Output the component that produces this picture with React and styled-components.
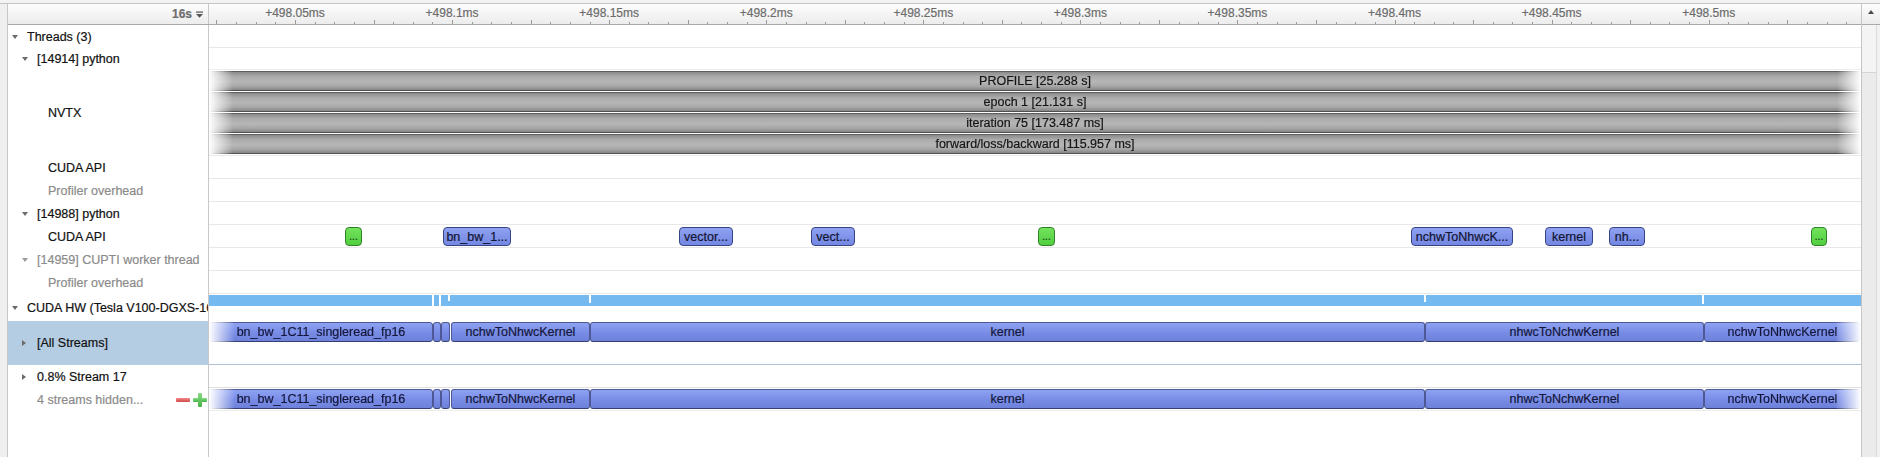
import React from "react";
import styled, { createGlobalStyle, css } from "styled-components";

// track geometry (px, measured from the left edge of the timeline)
const TRACK_W = 1652;
const TICK0 = 86; // x of "+498.05ms"
const STEP = 157.08; // 0.05 ms

const GlobalStyle = createGlobalStyle`
  * { box-sizing: border-box; }
  html, body { margin: 0; padding: 0; background: #fff; }
  body {
    font-family: "Liberation Sans", Arial, Helvetica, sans-serif;
    font-size: 12.5px;
    color: #141414;
    -webkit-text-stroke: 0.2px currentColor;
  }
`;

const Window = styled.div`
  width: 1880px;
  height: 457px;
  display: flex;
  flex-direction: column;
  overflow: hidden;
  background: #fff;
`;
const TopStrip = styled.div`
  height: 4px;
  background: #f3f3f3;
  border-bottom: 1px solid #c4c4c4;
`;
const Body = styled.div`
  flex: 1;
  display: flex;
  min-height: 0;
`;
const Gutter = styled.div`
  width: 8px;
  background: #efefef;
  border-right: 1px solid #c6c6c6;
`;
const Panel = styled.div`
  flex: 1;
  display: flex;
  flex-direction: column;
  min-width: 0;
`;

// header / ruler
const HeaderRow = styled.div`
  display: grid;
  grid-template-columns: 201px 1fr;
  height: 21px;
  background: linear-gradient(#fdfdfd, #ececec);
  border-bottom: 1px solid #a9a9a9;
`;
const ZoomCell = styled.div`
  display: flex;
  align-items: center;
  justify-content: flex-end;
  gap: 4px;
  padding-right: 5px;
  border-right: 1px solid #c8c8c8;
  color: #6e6e6e;
  font-size: 12px;
  font-weight: bold;
`;
const Ruler = styled.div`
  position: relative;
  overflow: hidden;
`;
const Tick = styled.div`
  position: absolute;
  bottom: 0;
  width: 1px;
  background: #9a9a9a;
  height: ${(p) => (p.$kind === "small" ? 2 : 4)}px;
`;
const TickLabel = styled.div`
  position: absolute;
  top: 2px;
  transform: translateX(-50%);
  color: #6c6c6c;
  font-size: 12px;
  white-space: nowrap;
`;

// tree rows
const Row = styled.div`
  display: grid;
  grid-template-columns: 201px 1fr;
  height: ${(p) => p.$h}px;
  flex: ${(p) => (p.$fill ? 1 : "none")};
`;
const Label = styled.div`
  display: flex;
  align-items: center;
  padding-left: ${(p) => p.$indent}px;
  padding-right: 1px;
  border-right: 1px solid #c8c8c8;
  background: ${(p) => (p.$selected ? "#b4cde3" : "transparent")};
  color: ${(p) => (p.$dim ? "#8b8b8b" : "#111")};
  white-space: nowrap;
  overflow: hidden;
`;
const Disclosure = styled.span`
  flex: none;
  width: 15px;
  height: 8px;
  display: flex;
  align-items: center;
  &::before {
    content: "";
    display: block;
    ${(p) =>
      p.$open
        ? css`
            border-left: 3.5px solid transparent;
            border-right: 3.5px solid transparent;
            border-top: 4px solid ${p.$dim ? "#9a9a9a" : "#6c6c6c"};
          `
        : css`
            border-top: 3.5px solid transparent;
            border-bottom: 3.5px solid transparent;
            border-left: 4px solid #6c6c6c;
          `}
  }
`;
const Tools = styled.svg`
  margin-left: auto;
  flex: none;
`;
const Track = styled.div`
  position: relative;
  border-bottom: 1px solid ${(p) => p.$line || "transparent"};
`;

// NVTX
const NvtxStack = styled.div`
  display: flex;
  flex-direction: column;
  gap: 1px;
  padding-top: 1px;
`;
const NvtxBar = styled.div`
  height: 20px;
  display: flex;
  align-items: center;
  justify-content: center;
  border-top: 1px solid #5e5e5e;
  border-bottom: 1px solid #505050;
  background: linear-gradient(#8a8a8a, #ababab 25%, #b6b6b6 55%, #a8a8a8 78%, #868686);
  color: #151515;
  -webkit-mask-image: linear-gradient(to right, transparent, #000 24px, #000 calc(100% - 24px), transparent);
  mask-image: linear-gradient(to right, transparent, #000 24px, #000 calc(100% - 24px), transparent);
`;

// CUDA API calls
const ApiCall = styled.div.attrs((p) => ({ style: { left: p.$x, width: p.$w } }))`
  position: absolute;
  top: 2px;
  height: 19px;
  display: flex;
  align-items: center;
  justify-content: center;
  border-radius: 4px;
  white-space: nowrap;
  overflow: hidden;
  ${(p) =>
    p.$green
      ? css`
          border: 1px solid #2f8227;
          background: linear-gradient(#72e25c, #52cf40);
          font-size: 10px;
          color: #173a12;
        `
      : css`
          border: 1px solid #374584;
          background: linear-gradient(#8ea1f2, #7487e2);
          color: #121533;
        `}
`;

// CUDA HW utilisation
const Usage = styled.div`
  position: absolute;
  top: 1px;
  left: 0;
  right: 0;
  height: 11px;
  background: #74b9ef;
`;
const Gap = styled.div.attrs((p) => ({ style: { left: p.$x, height: p.$hh } }))`
  position: absolute;
  top: 0;
  width: 2px;
  background: #fff;
`;

// kernels
const Kernel = styled.div.attrs((p) => ({ style: { left: p.$x, width: p.$w } }))`
  position: absolute;
  top: 1px;
  height: 20px;
  display: flex;
  align-items: center;
  justify-content: center;
  border: 1px solid #4d5894;
  border-bottom-color: #353f74;
  border-radius: 3px;
  background: linear-gradient(#8ea2f3, #788ce6 55%, #6d81da);
  color: #14173a;
  white-space: nowrap;
  overflow: hidden;
  ${(p) =>
    p.$fade === "left" &&
    css`
      -webkit-mask-image: linear-gradient(to right, transparent, #000 26px);
      mask-image: linear-gradient(to right, transparent, #000 26px);
    `}
  ${(p) =>
    p.$fade === "right" &&
    css`
      -webkit-mask-image: linear-gradient(to left, transparent, #000 26px);
      mask-image: linear-gradient(to left, transparent, #000 26px);
    `}
`;

// scrollbar
const ScrollBar = styled.div`
  width: 19px;
  display: flex;
  flex-direction: column;
  border-left: 1px solid #c6c6c6;
`;
const ScrollHead = styled.div`
  height: 21px;
  display: flex;
  align-items: center;
  justify-content: center;
  background: linear-gradient(#fdfdfd, #ececec);
  border-bottom: 1px solid #a9a9a9;
  &::before {
    content: "";
    margin-top: -4px;
    border-left: 3.5px solid transparent;
    border-right: 3.5px solid transparent;
    border-bottom: 4px solid #4a4a4a;
  }
`;
const ScrollTrack = styled.div`
  flex: 1;
  background: #ebebeb;
  border-right: 1px solid #dcdcdc;
  margin-right: 3px;
  box-shadow: 3px 0 0 #f1f1f1;
`;
const ScrollCap = styled.div`
  height: 48px;
  background: #f4f4f4;
  border-bottom: 1px solid #d4d4d4;
`;

const nvtx = [
  "PROFILE [25.288 s]",
  "epoch 1 [21.131 s]",
  "iteration 75 [173.487 ms]",
  "forward/loss/backward [115.957 ms]",
];

const apiCalls = [
  { x: 136, w: 17, text: "...", green: true },
  { x: 234, w: 68, text: "bn_bw_1..." },
  { x: 470, w: 54, text: "vector..." },
  { x: 602, w: 44, text: "vect..." },
  { x: 829, w: 17, text: "...", green: true },
  { x: 1202, w: 102, text: "nchwToNhwcK..." },
  { x: 1336, w: 48, text: "kernel" },
  { x: 1400, w: 36, text: "nh..." },
  { x: 1602, w: 16, text: "...", green: true },
];

const gaps = [
  { x: 223, h: 11 },
  { x: 230, h: 11 },
  { x: 239, h: 6 },
  { x: 380, h: 8 },
  { x: 1215, h: 7 },
  { x: 1493, h: 9 },
];

const kernels = [
  { x: 0, w: 224, text: "bn_bw_1C11_singleread_fp16", fade: "left" },
  { x: 224, w: 8 },
  { x: 232, w: 9 },
  { x: 242, w: 139, text: "nchwToNhwcKernel" },
  { x: 381, w: 835, text: "kernel" },
  { x: 1216, w: 279, text: "nhwcToNchwKernel" },
  { x: 1495, w: 157, text: "nchwToNhwcKernel", fade: "right" },
];

const rows = [
  { h: 23, level: 0, open: true, text: "Threads (3)", line: "#e8e8e8" },
  { h: 22, level: 1, open: true, text: "[14914] python", line: "#ededed" },
  { h: 86, level: 2, text: "NVTX", track: "nvtx", line: "#e8e8e8" },
  { h: 23, level: 2, text: "CUDA API", line: "#e8e8e8" },
  { h: 23, level: 2, text: "Profiler overhead", dim: true, line: "#e8e8e8" },
  { h: 23, level: 1, open: true, text: "[14988] python", line: "#e8e8e8" },
  { h: 23, level: 2, text: "CUDA API", track: "api", line: "#e8e8e8" },
  { h: 23, level: 1, open: true, dim: true, text: "[14959] CUPTI worker thread", line: "#e8e8e8" },
  { h: 23, level: 2, dim: true, text: "Profiler overhead", line: "#e8e8e8" },
  { h: 27, level: 0, open: true, text: "CUDA HW (Tesla V100-DGXS-16GB)", track: "hw" },
  { h: 44, level: 1, open: false, text: "[All Streams]", selected: true, track: "kernels", line: "#adc2d6" },
  { h: 23, level: 1, open: false, text: "0.8% Stream 17", line: "#e0e0e0" },
  { h: 23, level: 1, text: "4 streams hidden...", dim: true, track: "kernels", tools: true, line: "#ececec" },
];

const indentFor = (r) => {
  if (r.level === 0) return 4;
  if (r.level === 1) return r.open === undefined ? 29 : 14;
  return 40;
};

const ticks = [];
for (let i = -4; ; i++) {
  const x = TICK0 + (i * STEP) / 8;
  if (x > TRACK_W - 2) break;
  ticks.push({ x, kind: i % 4 === 0 ? "big" : "small" });
}
const tickLabels = [];
for (let k = 0; TICK0 + k * STEP < TRACK_W; k++) {
  const v = Number(((49805 + 5 * k) / 100).toFixed(2)).toString();
  tickLabels.push({ x: TICK0 + k * STEP, text: `+${v}ms` });
}

const MenuIcon = () => (
  <svg width="7" height="7" viewBox="0 0 7 7">
    <rect x="0" y="0.5" width="7" height="1.2" fill="#555" />
    <polygon points="0,3 7,3 3.5,6.8" fill="#555" />
  </svg>
);

const StreamTools = () => (
  <Tools width="31" height="14" viewBox="0 0 31 14">
    <defs>
      <linearGradient id="red" x1="0" y1="0" x2="0" y2="1">
        <stop offset="0" stopColor="#f08a8a" />
        <stop offset="1" stopColor="#d24848" />
      </linearGradient>
      <linearGradient id="grn" x1="0" y1="0" x2="0" y2="1">
        <stop offset="0" stopColor="#86dc86" />
        <stop offset="1" stopColor="#45b445" />
      </linearGradient>
    </defs>
    <rect x="0" y="5" width="14" height="4" rx="1" fill="url(#red)" />
    <rect x="17" y="5" width="14" height="4" rx="1" fill="url(#grn)" />
    <rect x="22" y="0" width="4" height="14" rx="1" fill="url(#grn)" />
  </Tools>
);

const TrackContent = ({ kind }) => {
  if (kind === "nvtx")
    return (
      <NvtxStack>
        {nvtx.map((t) => (
          <NvtxBar key={t}>{t}</NvtxBar>
        ))}
      </NvtxStack>
    );
  if (kind === "api")
    return apiCalls.map((c, i) => (
      <ApiCall key={i} $x={c.x} $w={c.w} $green={c.green}>
        {c.text}
      </ApiCall>
    ));
  if (kind === "hw")
    return (
      <Usage>
        {gaps.map((g, i) => (
          <Gap key={i} $x={g.x} $hh={g.h} />
        ))}
      </Usage>
    );
  if (kind === "kernels")
    return kernels.map((k, i) => (
      <Kernel key={i} $x={k.x} $w={k.w} $fade={k.fade}>
        {k.text}
      </Kernel>
    ));
  return null;
};

const App = () => {
  return (
    <Window>
      <GlobalStyle />
      <TopStrip />
      <Body>
        <Gutter />
        <Panel>
          <HeaderRow>
            <ZoomCell>
              16s
              <MenuIcon />
            </ZoomCell>
            <Ruler>
              {ticks.map((t, i) => (
                <Tick key={i} $kind={t.kind} style={{ left: t.x }} />
              ))}
              {tickLabels.map((l) => (
                <TickLabel key={l.text} style={{ left: l.x }}>
                  {l.text}
                </TickLabel>
              ))}
            </Ruler>
          </HeaderRow>
          {rows.map((r, i) => (
            <Row key={i} $h={r.h}>
              <Label $indent={indentFor(r)} $selected={r.selected} $dim={r.dim}>
                {r.open !== undefined && <Disclosure $open={r.open} $dim={r.dim} />}
                {r.text}
                {r.tools && <StreamTools />}
              </Label>
              <Track $line={r.line}>
                <TrackContent kind={r.track} />
              </Track>
            </Row>
          ))}
          <Row $fill>
            <Label $indent={0} />
            <Track />
          </Row>
        </Panel>
        <ScrollBar>
          <ScrollHead />
          <ScrollTrack>
            <ScrollCap />
          </ScrollTrack>
        </ScrollBar>
      </Body>
    </Window>
  );
};

export default App;
